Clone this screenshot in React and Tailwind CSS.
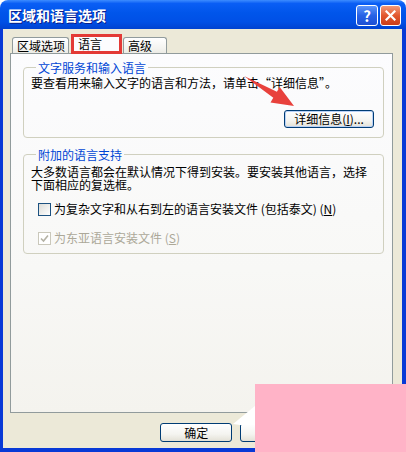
import React from "react";

const font = { fontFamily: '"Noto Sans CJK SC", "Noto Sans", sans-serif' };

function XpButton({ children, className = "" }) {
  return (
    <div
      className={`flex items-center justify-center rounded-[3px] border border-[#003c74] bg-[linear-gradient(to_bottom,#ffffff,#f4f4f0_60%,#e3e1d6)] text-[12px] leading-[14px] text-black ${className}`}
    >
      {children}
    </div>
  );
}

function Tab({ children, className = "" }) {
  return (
    <div
      className={`flex h-[16px] items-center rounded-t-[3px] border border-b-0 border-[#919b9c] bg-[linear-gradient(to_bottom,#ffffff,#f3f3ef_70%,#ecebe5)] text-[12px] leading-[14px] ${className}`}
    >
      {children}
    </div>
  );
}

export default function App() {
  return (
    <div className="relative h-[452px] w-[406px] overflow-hidden bg-white text-black" style={font}>
      <div className="flex h-full flex-col">
        {/* title bar */}
        <div className="flex h-[29px] shrink-0 items-center rounded-t-[8px] bg-[linear-gradient(to_bottom,#3d8cff,#0a5ef5_12%,#0055ea_45%,#0050e6_75%,#0042d0)] pl-[8px] pr-[5px]">
          <span className="text-[14px] font-bold leading-[16px] text-white [text-shadow:1px_1px_0_#0a1e8a]">
            区域和语言选项
          </span>
          <div className="ml-auto flex items-center gap-[2px] pt-[1px]">
            <div className="flex h-[21px] w-[22px] items-center justify-center rounded-[3px] border border-white bg-[linear-gradient(to_bottom,#5c95fa,#2762e6_50%,#1c4fd4)] text-[15px] font-bold leading-none text-white">
              ?
            </div>
            <div className="flex h-[21px] w-[21px] items-center justify-center rounded-[3px] border border-white bg-[linear-gradient(to_bottom,#f29a7a,#e2582f_50%,#cc3d18)]">
              <svg width="11" height="11" viewBox="0 0 11 11">
                <path d="M1.5 1.5 L9.5 9.5 M9.5 1.5 L1.5 9.5" stroke="white" strokeWidth="2.2" strokeLinecap="square" />
              </svg>
            </div>
          </div>
        </div>

        {/* window body */}
        <div className="flex flex-1 flex-col border-b-[4px] border-l-[3px] border-r-[4px] border-[#0839d6] bg-[#ece9d8] pl-[7px] pr-[9px]">
          {/* tabs */}
          <div className="flex h-[24px] shrink-0 items-end pl-[2px]">
            <Tab className="w-[57px] pl-[4px]">区域选项</Tab>
            <div className="relative z-10 -mb-[1px] ml-[2px] flex h-[20px] w-[51px] items-center border-[3px] border-[#e33a36] bg-[#fcfcfe] pl-[4px] text-[12px] leading-[14px]">
              语言
            </div>
            <Tab className="ml-[1px] w-[44px] pl-[4px]">高级</Tab>
          </div>

          {/* tab panel */}
          <div className="flex h-[360px] shrink-0 flex-col border border-[#919b9c] bg-[linear-gradient(to_bottom,#fcfcfe,#f8f8f6_60%,#f4f3ee)] pt-[7px]">
            <fieldset className="ml-[12px] mr-[8px] rounded-[4px] border border-[#d0d0bf] pb-[9px] pl-[7px] pr-[9px]">
              <legend className="ml-[5px] px-[2px] text-[12px] leading-[13px] text-[#0046d5]">文字服务和输入语言</legend>
              <div className="mt-[2px] text-[12px] leading-[14px]">要查看用来输入文字的语言和方法，请单击“详细信息”。</div>
              <div className="mt-[20px] flex justify-end">
                <XpButton className="h-[18px] w-[90px] shadow-[inset_0_0_0_1px_#b9d1f6]">
                  详细信息(<span className="underline">I</span>)...
                </XpButton>
              </div>
            </fieldset>

            <fieldset className="ml-[12px] mr-[8px] mt-[10px] rounded-[4px] border border-[#d0d0bf] pb-[8px] pl-[7px] pr-[6px]">
              <legend className="ml-[5px] px-[2px] text-[12px] leading-[13px] text-[#0046d5]">附加的语言支持</legend>
              <div className="mt-[4px] text-[12px] leading-[13px]">
                大多数语言都会在默认情况下得到安装。要安装其他语言，选择
                <br />
                下面相应的复选框。
              </div>
              <div className="mt-[11px] flex h-[14px] items-center gap-[3px] pl-[7px] text-[12px] leading-[14px]">
                <div className="h-[13px] w-[13px] border border-[#1c5180] bg-[linear-gradient(135deg,#dcdcd7,#ffffff)]" />
                <span>
                  为复杂文字和从右到左的语言安装文件 (包括泰文) (<span className="underline">N</span>)
                </span>
              </div>
              <div className="mt-[15px] flex h-[14px] items-center gap-[3px] pl-[7px] text-[12px] leading-[14px] text-[#aca899]">
                <div className="flex h-[13px] w-[13px] items-center justify-center border border-[#cac8bb] bg-white">
                  <svg width="9" height="9" viewBox="0 0 9 9">
                    <path d="M1 4.5 L3.5 7 L8 1.5" fill="none" stroke="#b4b2a5" strokeWidth="1.6" />
                  </svg>
                </div>
                <span>
                  为东亚语言安装文件 (<span className="underline">S</span>)
                </span>
              </div>
            </fieldset>
          </div>

          {/* dialog buttons */}
          <div className="mt-[10px] flex gap-[8px] pl-[150px]">
            <XpButton className="h-[19px] w-[73px]">确定</XpButton>
            <XpButton className="h-[19px] w-[73px]">取消</XpButton>
            <XpButton className="h-[19px] w-[73px]">应用(A)</XpButton>
          </div>
        </div>
      </div>

      {/* annotations */}
      <svg className="pointer-events-none absolute inset-0" width="406" height="452" viewBox="0 0 406 452">
        <polygon points="244,76 276.9,91.7 279.7,87 294,106 270.5,102.4 273.3,97.7" fill="#e8413c" />
        <polygon points="233,424 255,406 255,425 240,425" fill="#ffffff" />
      </svg>
      <div className="absolute left-[255px] top-[384px] h-[68px] w-[151px] bg-[#ffb3c7]" />
    </div>
  );
}
